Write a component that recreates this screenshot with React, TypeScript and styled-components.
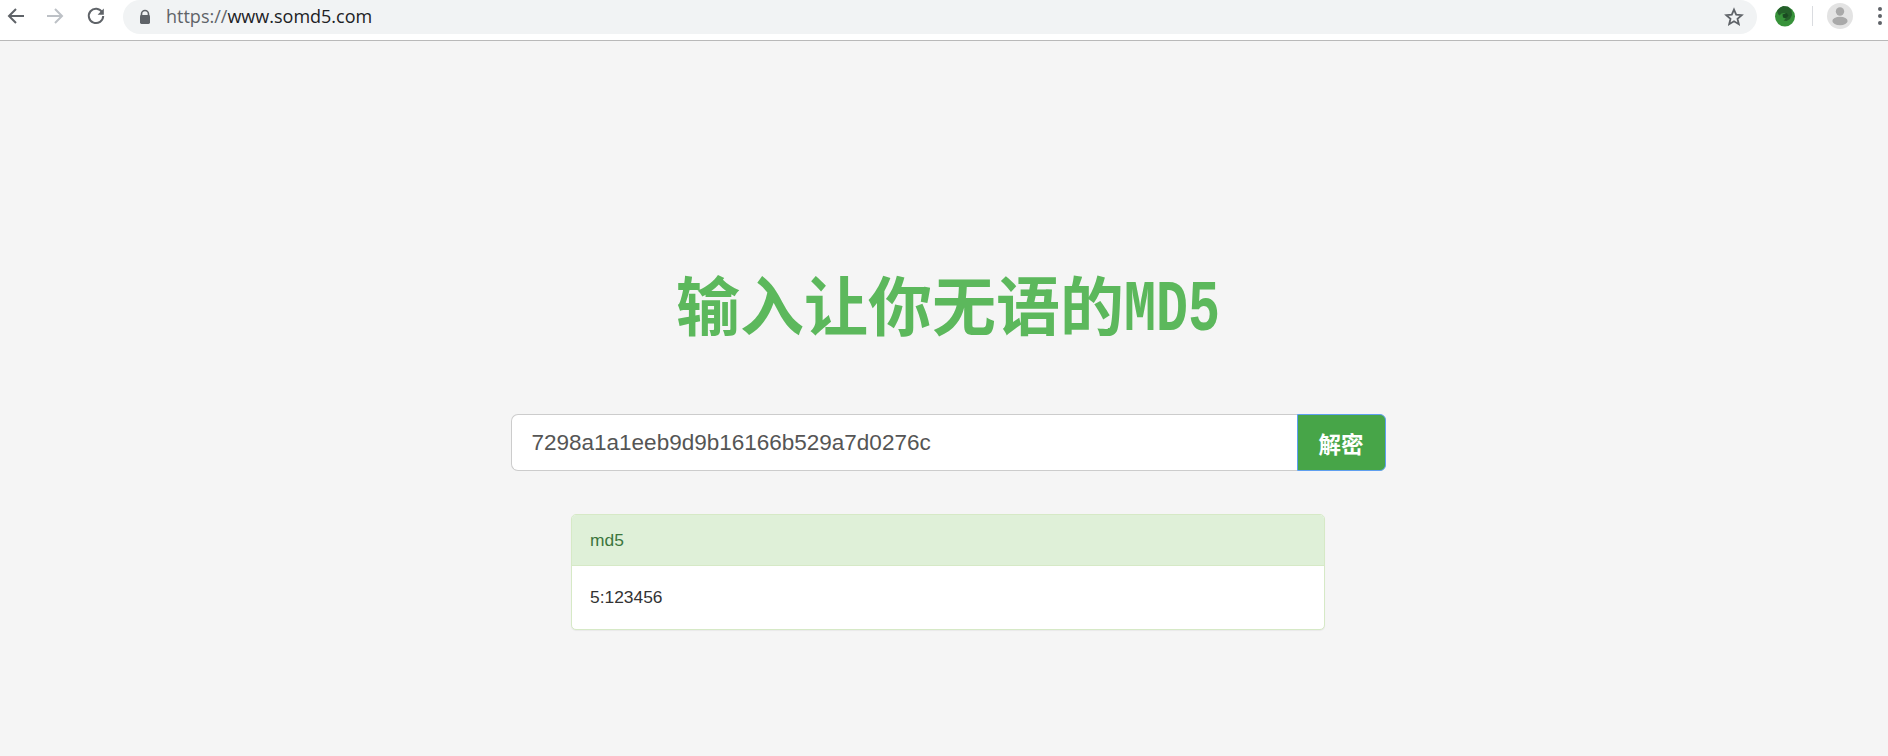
import React from "react";
import styled, { createGlobalStyle } from "styled-components";

const Global = createGlobalStyle`
  html, body { margin: 0; padding: 0; height: 100%; background: #f5f5f5; overflow: hidden; }
  #root { height: 100%; }
`;

const Page = styled.div`
  width: 1888px;
  height: 756px;
  display: flex;
  flex-direction: column;
  font-family: "Liberation Sans", "Noto Sans CJK SC", sans-serif;
`;

const Toolbar = styled.header`
  flex: none;
  height: 40px;
  background: #fff;
  border-bottom: 1px solid #b9b9b9;
  display: flex;
  align-items: flex-start;
`;

const NavGroup = styled.nav`
  flex: none;
  display: flex;
  width: 123px;
  padding-left: 4px;
  box-sizing: border-box;
`;

const NavButton = styled.span<{ $w: number }>`
  flex: none;
  width: ${(p) => p.$w}px;
  height: 32px;
  display: flex;
  align-items: center;
  justify-content: center;
`;

const Omnibox = styled.div`
  flex: none;
  width: 1634px;
  height: 34px;
  background: #f1f3f4;
  border-radius: 17px;
  display: flex;
  align-items: center;
  padding: 0 13px 0 15px;
  box-sizing: border-box;
  gap: 14px;
`;

const Url = styled.span`
  flex: 1;
  font-family: "Open Sans", "Noto Sans", sans-serif;
  font-size: 18px;
  color: #202124;
  position: relative;
  top: -1px;
`;

const UrlScheme = styled.span`
  color: #5f6368;
`;

const Actions = styled.div`
  flex: none;
  display: flex;
  align-items: center;
  height: 32px;
  padding-left: 17px;
`;

const Divider = styled.span`
  width: 1px;
  height: 20px;
  background: #dadce0;
  margin: 0 14px 0 16px;
`;

const Menu = styled.span`
  display: flex;
  margin-left: 23px;
`;

const Main = styled.main`
  flex: 1;
  display: flex;
  flex-direction: column;
  align-items: center;
  padding-left: 8px;
`;

const Title = styled.h1`
  margin: 222px 0 0;
  height: 78px;
  line-height: 78px;
  font-family: "Noto Sans CJK SC", sans-serif;
  font-size: 64px;
  font-weight: 700;
  color: #5cb85c;
  white-space: nowrap;
  display: flex;
  align-items: baseline;
`;

const Latin = styled.span`
  display: inline-block;
  width: 96px;
  font-family: "Liberation Mono", monospace;
  font-size: 72px;
  font-weight: 700;
  transform: scaleX(0.74);
  transform-origin: left center;
`;

const SearchRow = styled.form`
  margin-top: 73px;
  display: flex;
  width: 875px;
  height: 57px;
`;

const SearchInput = styled.input`
  width: 786px;
  height: 57px;
  box-sizing: border-box;
  padding: 0 20px;
  font-family: "Liberation Sans", sans-serif;
  font-size: 22.5px;
  color: #555;
  background: #fff;
  border: 1px solid #ccc;
  border-right: 0;
  border-radius: 7px 0 0 7px;
  outline: 0;
`;

const SearchButton = styled.button`
  width: 89px;
  height: 57px;
  box-sizing: border-box;
  background: #47a548;
  color: #fff;
  border: 1px solid #5f9ff0;
  border-radius: 0 6px 6px 0;
  font-family: "Noto Sans CJK SC", sans-serif;
  font-size: 22.5px;
  font-weight: 700;
  padding: 0;
`;

const Panel = styled.section`
  margin-top: 43px;
  width: 754px;
  box-sizing: border-box;
  border: 1px solid #d6e9c6;
  border-radius: 5px;
  background: #fff;
  overflow: hidden;
  box-shadow: 0 1px 1px rgba(0, 0, 0, 0.05);
  font-size: 17.4px;
`;

const PanelHead = styled.div`
  height: 51px;
  display: flex;
  align-items: center;
  padding: 0 18px;
  box-sizing: border-box;
  background: #dff0d8;
  border-bottom: 1px solid #d6e9c6;
  color: #3c763d;
`;

const PanelBody = styled.div`
  height: 63px;
  display: flex;
  align-items: center;
  padding: 0 18px;
  box-sizing: border-box;
  color: #333;
`;

const Back = () => (
  <svg width="20" height="20" viewBox="0 0 20 20" fill="none" stroke="#5f6368" strokeWidth="2">
    <path d="M18 10H3M10 3l-7 7 7 7" />
  </svg>
);
const Forward = () => (
  <svg width="20" height="20" viewBox="0 0 20 20" fill="none" stroke="#bdc1c6" strokeWidth="2">
    <path d="M2 10h15M10 3l7 7-7 7" />
  </svg>
);
const Reload = () => (
  <svg width="20" height="20" viewBox="0 0 20 20" fill="none">
    <path d="M16.2 6.2A7.2 7.2 0 1 0 17.2 10" stroke="#5f6368" strokeWidth="2" />
    <path d="M17.8 2.6v6.2h-6.2z" fill="#5f6368" />
  </svg>
);
const Lock = () => (
  <svg width="14" height="16" viewBox="0 0 14 16">
    <path d="M3.5 7V5a3.5 3.5 0 0 1 7 0v2" fill="none" stroke="#5f6368" strokeWidth="1.6" />
    <rect x="2" y="6" width="10" height="9" rx="1.4" fill="#5f6368" />
  </svg>
);
const Star = () => (
  <svg width="20" height="20" viewBox="0 0 20 20" fill="none" stroke="#5f6368" strokeWidth="1.8" strokeLinejoin="miter">
    <path d="M10 2.6l2.2 5.1 5.5.5-4.2 3.6 1.3 5.4L10 14.3l-4.8 2.9 1.3-5.4-4.2-3.6 5.5-.5z" />
  </svg>
);
const Extension = () => (
  <svg width="22" height="22" viewBox="0 0 22 22">
    <circle cx="11" cy="11.5" r="10" fill="#37923a" />
    <path d="M3 6l3-3.5L9 1l5 .5 3.5 3.5.5 5-2 4-3.5 2-3-.5 3-2.5.5-3-2-2-3.5.5-2 2L4 9z" fill="#24602a" />
    <path d="M8.5 9.5l4-1.5 2 2.5-2.5 3-3-1z" fill="#1a4a22" />
  </svg>
);
const Avatar = () => (
  <svg width="26" height="26" viewBox="0 0 26 26">
    <circle cx="13" cy="13" r="13" fill="#e3e3e3" />
    <circle cx="13" cy="8.5" r="4.2" fill="#a9a9a9" />
    <ellipse cx="13" cy="18" rx="7.6" ry="4.2" fill="#a9a9a9" />
  </svg>
);
const Dots = () => (
  <svg width="8" height="20" viewBox="0 0 8 20" fill="#5f6368">
    <circle cx="4" cy="3" r="2" />
    <circle cx="4" cy="10" r="2" />
    <circle cx="4" cy="17" r="2" />
  </svg>
);

export default function App() {
  return (
    <Page>
      <Global />
      <Toolbar>
        <NavGroup>
          <NavButton $w={24}><Back /></NavButton>
          <NavButton $w={54}><Forward /></NavButton>
          <NavButton $w={28}><Reload /></NavButton>
        </NavGroup>
        <Omnibox>
          <Lock />
          <Url><UrlScheme>https://</UrlScheme>www.somd5.com</Url>
          <Star />
        </Omnibox>
        <Actions>
          <Extension />
          <Divider />
          <Avatar />
          <Menu><Dots /></Menu>
        </Actions>
      </Toolbar>
      <Main>
        <Title>输入让你无语的<Latin>MD5</Latin></Title>
        <SearchRow onSubmit={(e) => e.preventDefault()}>
          <SearchInput defaultValue="7298a1a1eeb9d9b16166b529a7d0276c" />
          <SearchButton type="button">解密</SearchButton>
        </SearchRow>
        <Panel>
          <PanelHead>md5</PanelHead>
          <PanelBody>5:123456</PanelBody>
        </Panel>
      </Main>
    </Page>
  );
}
